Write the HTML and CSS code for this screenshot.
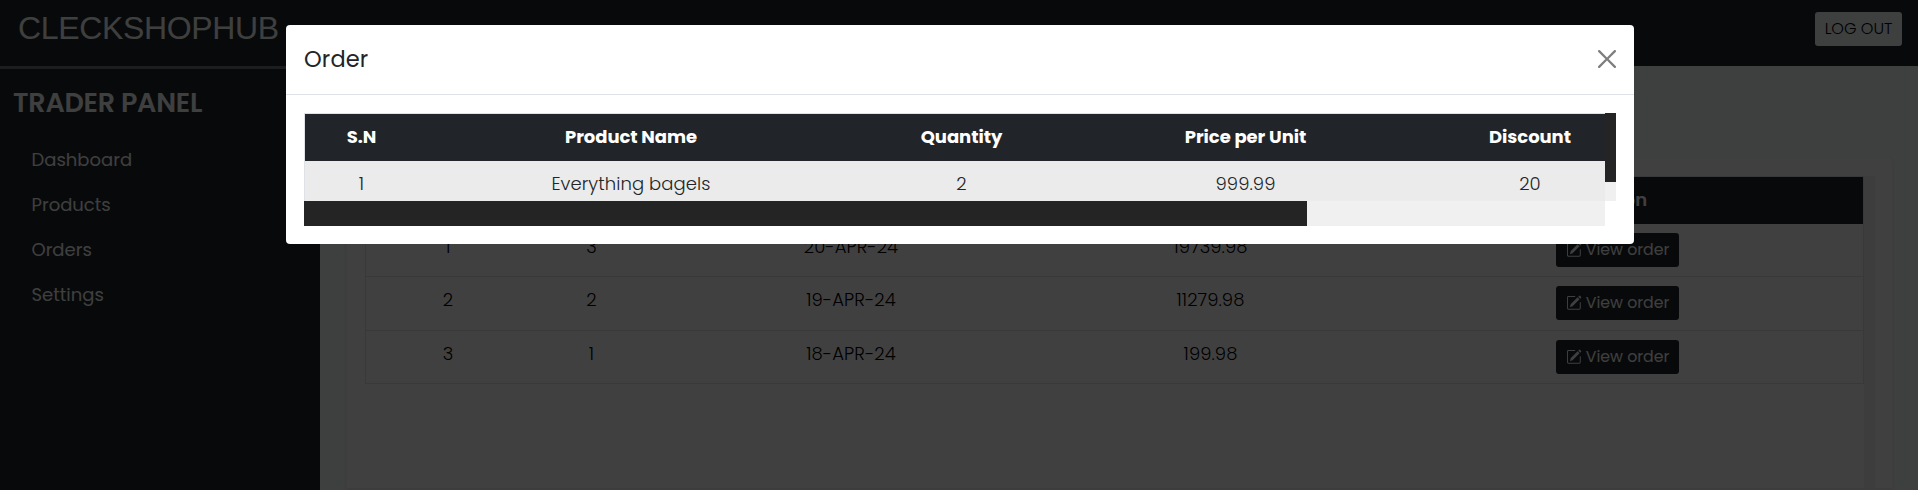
FILE: index.html
```html
<!DOCTYPE html>
<html lang="en">
<head>
<meta charset="utf-8">
<title>Trader Panel</title>
<link rel="stylesheet" href="styles.css">
</head>
<body>
<svg width="0" height="0" class="defs"><symbol id="edit" viewBox="0 0 16 16"><path d="M15.502 1.94a.5.5 0 0 1 0 .706L14.459 3.69l-2-2L13.502.646a.5.5 0 0 1 .707 0l1.293 1.293zm-1.75 2.456-2-2L4.939 9.21a.5.5 0 0 0-.121.196l-.805 2.414a.25.25 0 0 0 .316.316l2.414-.805a.5.5 0 0 0 .196-.12l6.813-6.814z"/><path fill-rule="evenodd" d="M1 13.5A1.5 1.5 0 0 0 2.500 15h11a1.500 1.500 0 0 0 1.500-1.500v-6a.5.5 0 0 0-1 0v6a.5.5 0 0 1-.5.5h-11a.5.5 0 0 1-.5-.5v-11a.5.5 0 0 1 .5-.5H9a.5.5 0 0 0 0-1H2.500A1.500 1.500 0 0 0 1 2.500v11z"/></symbol></svg>
<div class="page">
  <header class="navbar"><span class="brand">CLECKSHOPHUB</span><button class="logout"><span>LOG OUT</span></button></header>
  <div class="body">
    <aside class="sidebar">
      <h1><span>TRADER PANEL</span></h1>
      <nav><a>Dashboard</a><a>Products</a><a>Orders</a><a>Settings</a></nav>
    </aside>
    <main class="main">
      <section class="card">
        <div class="scroller">
          <div class="orders">
            <div class="row head"><span></span><span></span><span></span><span></span><span>Action</span></div>
            <div class="row"><span>1</span><span>3</span><span>20-APR-24</span><span>19739.98</span><span><button class="view"><svg><use href="#edit"/></svg><b>View order</b></button></span></div>
            <div class="row tall"><span>2</span><span>2</span><span>19-APR-24</span><span>11279.98</span><span><button class="view"><svg><use href="#edit"/></svg><b>View order</b></button></span></div>
            <div class="row"><span>3</span><span>1</span><span>18-APR-24</span><span>199.98</span><span><button class="view"><svg><use href="#edit"/></svg><b>View order</b></button></span></div>
          </div>
          <div class="track"></div>
        </div>
      </section>
    </main>
  </div>
</div>
<div class="backdrop"></div>
<div class="modal">
  <div class="modal-head"><h2>Order</h2><svg class="close" viewBox="0 0 16 16"><path d="M.293.293a1 1 0 0 1 1.414 0L8 6.586 14.293.293a1 1 0 1 1 1.414 1.414L9.414 8l6.293 6.293a1 1 0 0 1-1.414 1.414L8 9.414l-6.293 6.293a1 1 0 0 1-1.414-1.414L6.586 8 .293 1.707a1 1 0 0 1 0-1.414z"/></svg></div>
  <div class="modal-body">
    <div class="table-area">
      <div class="items ihead"><span>S.N</span><span>Product Name</span><span>Quantity</span><span>Price per Unit</span><span>Discount</span></div>
      <div class="items irow"><span>1</span><span>Everything bagels</span><span>2</span><span>999.99</span><span>20</span></div>
      <div class="hbar"><div class="hthumb"></div></div>
    </div>
    <div class="vbar"><div class="vthumb"></div></div>
  </div>
</div>
</body>
</html>
```
FILE: styles.css
```css
* { box-sizing: border-box; }
body { margin: 0; height: 490px; overflow: hidden; font: 18px/27px Poppins, Inter, sans-serif; color: #212529; }
button { font: inherit; border: 0; padding: 0; }
h1, h2 { margin: 0; font-weight: 500; }
.defs { position: absolute; }
.page { height: 490px; display: flex; flex-direction: column; background: #f7fffb; }
.navbar { height: 66px; flex: none; background: #212529; display: flex; justify-content: space-between; align-items: flex-start; padding: 12px 16px 0 18px; }
.brand { font: 32px/33px "Liberation Sans", Arial, sans-serif; letter-spacing: -.35px; color: #f8f9fa; }
.logout { width: 87px; height: 34px; border-radius: 3px; background: #f8f9fa; font-size: 16px; line-height: 34px; font-weight: 300; color: #000; }
.body { flex: 1; display: flex; min-height: 0; }
.sidebar { width: 320px; background: #212529; border-top: 3px solid #70757a; color: #f8f9fa; }
.sidebar h1 { margin: 15px 0 0 13px; font-size: 27px; line-height: 38px; font-weight: 600; letter-spacing: -.25px; white-space: nowrap; }
nav { display: flex; flex-direction: column; align-items: flex-start; padding: 15px 0 0 31.5px; }
nav a { height: 45px; line-height: 45px; }
.main { flex: 1; padding: 91px 25px 2px; }
.card { height: 331px; margin-left: 1px; background: #fff; border: 1px solid #f5f5f5; border-bottom: 0; border-radius: 4px 4px 0 0; padding: 18px 17px 0 18px; box-shadow: 0 2px 4px rgba(0,0,0,.07); }
.scroller { display: flex; justify-content: space-between; height: 100%; }
.orders { width: 1499px; }
.track { width: 11px; background: #f1f1f1; }
.row { display: grid; grid-template-columns: 164px 123px 396px 323px 1fr; height: 53px; text-align: center; border: solid #dee2e6; border-width: 0 1px 1px; font-weight: 300; letter-spacing: .06px; line-height: 27px; padding-top: 9px; color: #000; }
.row.tall { height: 54px; }
.row.head { height: 48px; background: linear-gradient(#dee2e6 1px, #212529 1px); border-bottom: 0; padding-top: 10px; color: #fff; font-weight: 600; }
.view { display: inline-flex; vertical-align: top; align-items: center; gap: 4px; width: 123px; height: 34px; padding-left: 10px; background: #212529; color: #f8f9fa; border-radius: 3px; font-size: 15.75px; letter-spacing: 0; line-height: 24px; }
.view b { font-weight: 400; }
.view svg { width: 15.75px; height: 15.75px; margin-top: -1px; fill: currentColor; }
.backdrop { position: absolute; inset: 0; background: rgba(0,0,0,.75); }
.modal { position: absolute; left: 286px; top: 25px; width: 1348px; height: 219px; background: #fff; border-radius: 4px; }
.modal-head { height: 70px; border-bottom: 1px solid #dee2e6; padding: 0 18px; display: flex; justify-content: space-between; align-items: center; }
.modal-head h2 { font-size: 22.5px; line-height: 33px; font-weight: 400; letter-spacing: .15px; }
.close { width: 18px; height: 18px; margin-bottom: 2px; opacity: .5; }
.modal-body { display: flex; padding: 18px; }
.table-area { width: 1301px; overflow: hidden; }
.items { width: 1344px; display: grid; grid-template-columns: 113px 426px 235px 333px 1fr; text-align: center; }
.ihead { height: 48px; padding-top: 9px; border-top: 1px solid #dee2e6; border-left: 1px solid #dee2e6; background: #212529; color: #fff; font-weight: 700; letter-spacing: -.06px; }
.irow { height: 40px; padding-top: 9px; background: #ebebeb; border-left: 1px solid #dee2e6; font-weight: 300; letter-spacing: .08px; }
.hbar { height: 25px; background: #f0f0f0; }
.hthumb { width: 1003px; height: 25px; background: #242424; }
.vbar { width: 11px; height: 88px; background: #f0f0f0; }
.vthumb { height: 69px; background: #242424; }
```
